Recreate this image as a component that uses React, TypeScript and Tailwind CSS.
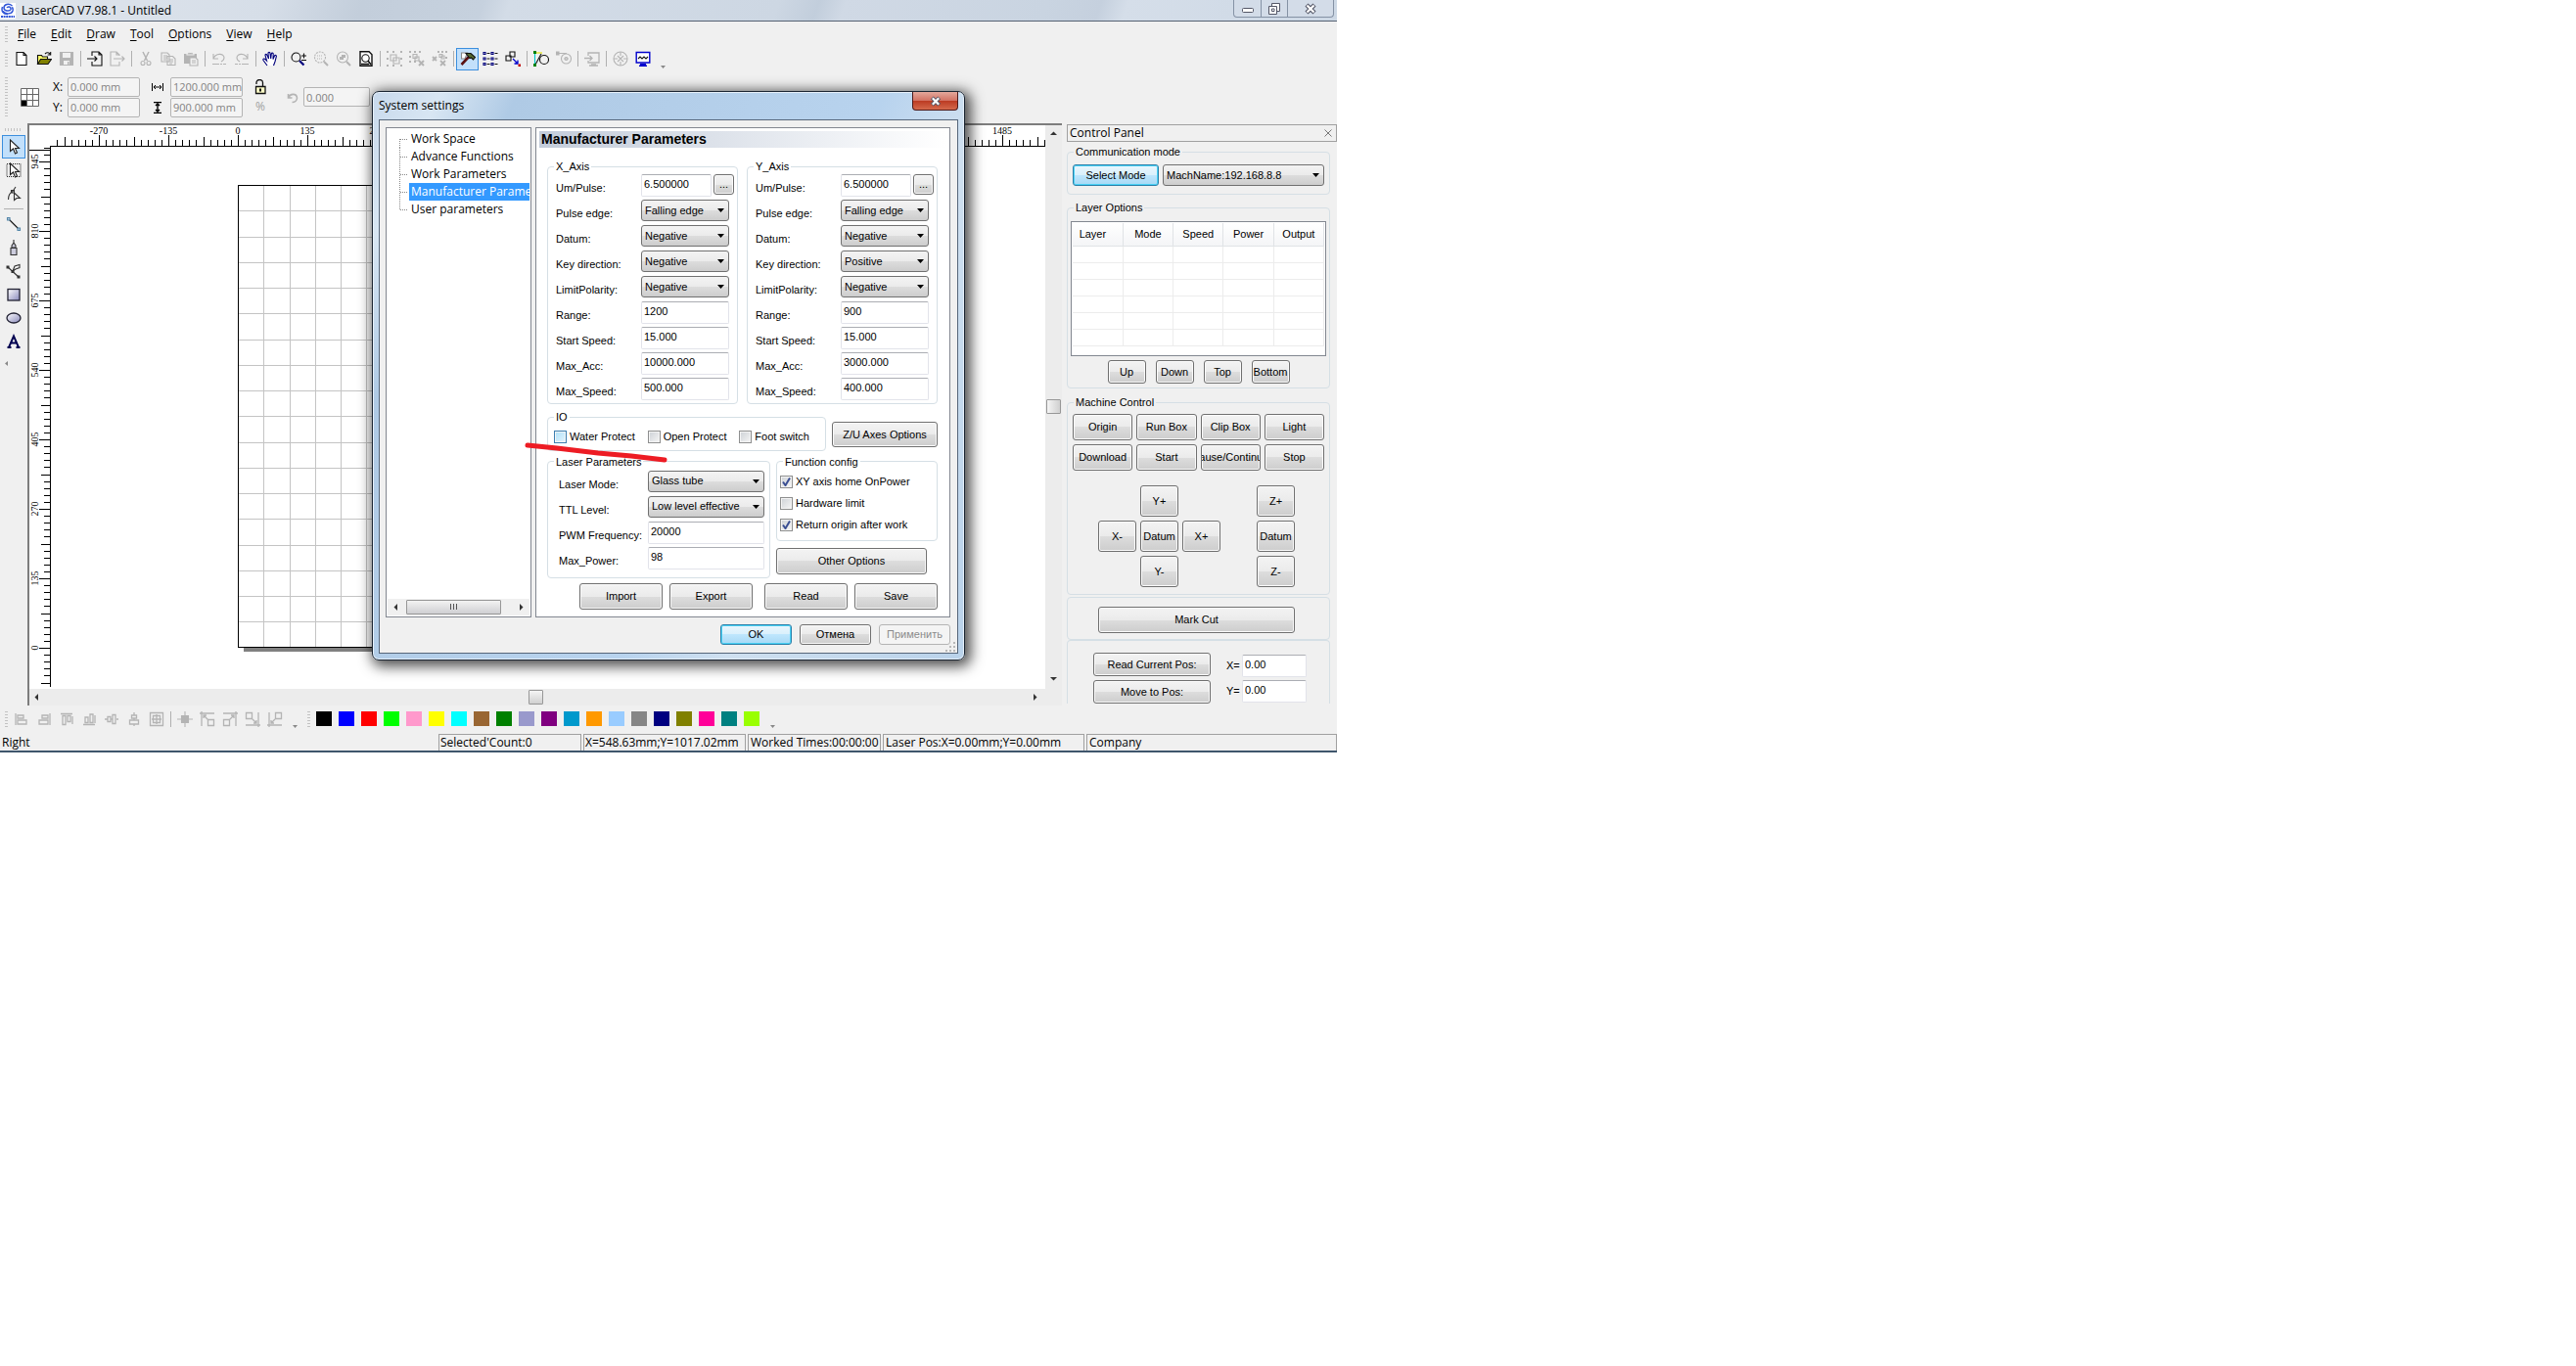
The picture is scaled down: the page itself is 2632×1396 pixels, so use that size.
import { useId, type ReactNode } from 'react';
import clsx from 'clsx';

const G = '#b4b4b4';
const K = '#111111';
const N = '#00007c';

const menus = ['File', 'Edit', 'Draw', 'Tool', 'Options', 'View', 'Help'];

const swatches = [
  '#000000', '#0000ff', '#ff0000', '#00ff00', '#ff99cc', '#ffff00', '#00ffff', '#996633', '#008000', '#9999cc',
  '#800080', '#0099cc', '#ff9900', '#99ccff', '#868686', '#000080', '#808000', '#ff0099', '#008080', '#99ff00',
];

const Icon = ({ children, size = 16 }: { children: ReactNode; size?: number }) => (
  <svg width={size} height={size} viewBox="0 0 16 16" fill="none" strokeWidth="1.1" aria-hidden="true" className="shrink-0">
    {children}
  </svg>
);

type Tool = { name: string; icon: ReactNode; active?: boolean } | null;

const mainTools: Tool[] = [
  { name: 'New', icon: <path d="M3 1.5h7l3 3v10H3zM10 1.5v3h3" stroke={K} fill="#fff" /> },
  {
    name: 'Open',
    icon: (
      <>
        <path d="M1.5 13.500V4.500h4l1 1.500h5v2.500" stroke={K} fill="#ffff66" />
        <path d="M1.500 13.500l3-5h11l-3.500 5z" stroke={K} fill="#808000" />
        <path d="M9 3c2-2 4-1.500 5.500.5M14.700 1v3h-3" stroke={K} />
      </>
    ),
  },
  {
    name: 'Save',
    icon: (
      <>
        <path d="M1.500 1.500h13v13h-13z" stroke={G} fill={G} />
        <path d="M4 2h8v5H4zM5 10h6v4H5z" fill="#f0f0f0" />
        <path d="M9 11h1.500v3H9z" fill={G} />
      </>
    ),
  },
  null,
  { name: 'Import', icon: <path d="M5 5V1h7l3 3v11H5v-4M12 1v3h3M0 8h10M7.500 5.500L10 8l-2.500 2.500" stroke={K} /> },
  { name: 'Export', icon: <path d="M10 5V4L7 1H1v14h9v-4M7 1v3h3M4 8h11M12.500 5.500L15 8l-2.500 2.500" stroke={G} /> },
  null,
  {
    name: 'Cut',
    icon: (
      <g stroke={G}>
        <path d="M5 1l4.500 9M11 1L6.500 10" strokeWidth="1.500" />
        <circle cx="5" cy="12.500" r="2" />
        <circle cx="11" cy="12.500" r="2" />
      </g>
    ),
  },
  {
    name: 'Copy',
    icon: <path d="M1 2h6l2 2v7H1zM3 5h4M3 7h4M3 9h3M7 5.500h5.500l2.500 2.500v6.500H7zM9 9h4M9 11h4M9 13h3" stroke={G} />,
  },
  {
    name: 'Paste',
    icon: (
      <>
        <path d="M1 3h13v10H1z" fill={G} />
        <path d="M4 3c0-2 7-2 7 0v1H4z" fill={G} stroke="#f0f0f0" />
        <path d="M7 7h6l2 2v6H7z" fill="#f0f0f0" stroke={G} />
        <path d="M9 10h4M9 12h4" stroke={G} />
      </>
    ),
  },
  null,
  { name: 'Undo', icon: <path d="M2 3v5h5M2 8c2-6 11-6 11-1 0 2-1 3-3 4M1 13.500h7M9 13.500h2M12 13.500h3" stroke={G} /> },
  { name: 'Redo', icon: <path d="M14 3v5H9M14 8c-2-6-11-6-11-1 0 2 1 3 3 4M15 13.500H8M7 13.500H5M4 13.500H1" stroke={G} /> },
  null,
  {
    name: 'Pan',
    icon: (
      <path
        d="M5 15L1 9.500c-.5-1.500 1-2 2-1l1.500 1.500L3 4.500c0-1.500 1.500-1.500 2 0L6.500 8 6 2.500c0-1.500 2-1.500 2 0L8.700 8l.6-5c.2-1.300 2-1 1.900.2L11 8.500l1.500-3.500c.6-1.200 2.200-.6 1.800.8L13 11l-1.500 4"
        stroke={N}
        fill="#fff"
      />
    ),
  },
  null,
  {
    name: 'Zoom',
    icon: (
      <>
        <circle cx="5.500" cy="6.500" r="4.500" stroke={K} />
        <path d="M9 10l4.500 4.500" stroke={N} strokeWidth="2.200" />
        <path d="M11 5h5M13.500 2.500v5M11 9.500h5" stroke={K} />
      </>
    ),
  },
  {
    name: 'Zoom selection',
    icon: (
      <>
        <circle cx="7" cy="6.500" r="5.500" stroke={G} strokeDasharray="2 1" />
        <path d="M11 11l4 4" stroke={G} strokeWidth="2" />
        <path d="M4 5h6M4 8h6" stroke={G} strokeDasharray="1 1" />
      </>
    ),
  },
  {
    name: 'Zoom objects',
    icon: (
      <>
        <circle cx="7" cy="6.500" r="5.500" stroke={G} />
        <path d="M11 11l4 4" stroke={G} strokeWidth="2" />
        <path d="M4 6h4v3H4zM6 4h4v3H6z" fill={G} />
      </>
    ),
  },
  {
    name: 'Zoom page',
    icon: (
      <>
        <path d="M2 .800h9l3 3v11.400H2z" stroke={K} fill="#fff" strokeWidth="1.400" />
        <circle cx="7.500" cy="7.500" r="3.700" stroke={K} />
        <path d="M10 10l3 4M3 13.500h8" stroke={K} strokeWidth="1.500" />
      </>
    ),
  },
  null,
  {
    name: 'Group',
    icon: (
      <g stroke={G}>
        <path d="M0 1h2M6 1h2M14 1h2M0 15h2M6 15h2M14 15h2M0 8h2M14 8h2" strokeWidth="2" />
        <path d="M4 4h6v6H4zM7 7h6v6H7z" />
      </g>
    ),
  },
  {
    name: 'Ungroup',
    icon: (
      <g stroke={G}>
        <path d="M0 1h2M5 1h2M10 1h2M0 6h2M0 11h2M5 11h2" strokeWidth="2" />
        <path d="M4 3.500h4v4H4zM6 6h4v4H6z" />
        <path d="M10 10l5 5M15 10l-5 5" strokeWidth="2" />
      </g>
    ),
  },
  {
    name: 'Ungroup all',
    icon: (
      <g stroke={G}>
        <path d="M6 1h2M10 1h2M14 1h2M14 7h2" strokeWidth="2" />
        <path d="M8 3.500h3v3H8zM10 5h3v3h-3z" />
        <path d="M1 6l4 4M5 6l-4 4M9 10l5 5M14 10l-5 5" strokeWidth="1.800" />
      </g>
    ),
  },
  null,
  {
    name: 'System settings',
    active: true,
    icon: (
      <>
        <path d="M1.500 2h6L5 8H1.500z" fill="#fff" stroke="#888" />
        <path d="M9 6l-7.500 8" stroke="#5a1010" strokeWidth="2.600" />
        <path d="M6 2.500h5l4.500 4-2 2.500-2-2-1.500.5L8 5z" fill="#556b2f" stroke={K} />
      </>
    ),
  },
  {
    name: 'Array',
    icon: (
      <g>
        <path d="M1 1.500h2v2H1zM1 7h2v2H1zM1 12.500h2v2H1zM9 1.500h2v2H9zM9 7h2v2H9zM9 12.500h2v2H9z" stroke={N} />
        <path d="M4.500 2.500h3M12.500 2.500h3M4.500 8h3M12.500 8h3M4.500 13.500h3M12.500 13.500h3" stroke={K} />
      </g>
    ),
  },
  {
    name: 'Offset',
    icon: (
      <>
        <path d="M5 1h5v5H5zM1 5h5v5H1z" stroke={K} />
        <path d="M8 8l5 5M13 9.500V13H9.500" stroke="#0000cc" strokeWidth="1.300" />
        <path d="M13.500 13.500h2.500v2.500h-2.500z" fill="#c00000" />
      </>
    ),
  },
  null,
  {
    name: 'Shape',
    icon: (
      <>
        <circle cx="11" cy="9" r="4.500" stroke={K} />
        <path d="M1.500 2v12" stroke="#00c8c8" />
        <path d="M2 14L8 3" stroke={K} />
        <path d="M3 2h6" stroke="#e6e600" />
        <path d="M0 0h3v3H0zM0 13h3v3H0z" fill="#008000" />
      </>
    ),
  },
  {
    name: 'Path',
    icon: (
      <g stroke={G}>
        <circle cx="10.500" cy="8" r="5" />
        <circle cx="10.500" cy="8" r="1.500" />
        <path d="M1 2.500h10M8.500 8h4" />
        <path d="M0 1h3v3H0z" fill={G} />
      </g>
    ),
  },
  null,
  { name: 'Send', icon: <path d="M4 5V2h11v10H4v-2M0 7.500h8M5.500 5L8 7.500 5.500 10M7 14h5M5 15h9" stroke={G} strokeWidth="1.300" /> },
  null,
  {
    name: 'Simulate',
    icon: (
      <g stroke={G}>
        <circle cx="8" cy="8" r="7" />
        <path d="M8 1v4M8 11v4M1 8h4M11 8h4M5 5l6 6M11 5l-6 6" />
      </g>
    ),
  },
  {
    name: 'Preview',
    icon: (
      <>
        <path d="M1.200 1.500h13.600v10.500H1.200z" stroke="#0000cc" strokeWidth="1.400" fill="#fff" />
        <path d="M3 8l2-2 2 2 2-2 2 2 2-2" stroke={K} />
        <path d="M5 13h6v1.500h1V16H4v-1.500h1z" fill="#0000cc" />
      </>
    ),
  },
];

const drawTools: Tool[] = [
  { name: 'Select', active: true, icon: <path d="M4.500 1v11.500l3-2.500 2 5 2-1-2-4.500h4z" stroke="#222" fill="#fff" /> },
  {
    name: 'Select region',
    icon: (
      <>
        <path d="M1 1.500h14v13H1z" stroke="#222" strokeDasharray="1 1" />
        <path d="M4.500 1v11.500l3-2.500 2 5 2-1-2-4.500h4z" stroke="#222" fill="#fff" />
      </>
    ),
  },
  { name: 'Edit node', icon: <path d="M10 1L7 5.500M2.500 14c0-4 1.500-7 4.500-8.500M5.500 4.500h3v2.500h-3zM8.500 7v7.500l2.500-2h3.500z" stroke="#333" /> },
  null,
  {
    name: 'Line',
    icon: (
      <>
        <path d="M3.500 3.500l9 9" stroke={K} />
        <path d="M1.500 1.500h2.500v2.500h-2.500zM12 12h2.500v2.500h-2.500z" stroke="#5588aa" fill="#bcd" />
      </>
    ),
  },
  { name: 'Polyline', icon: <path d="M8 0v3M6 6l2-3 2 3v2H6zM5 8.500h6v7H5z" stroke="#333" fill="#ccccdd" /> },
  {
    name: 'Curve',
    icon: (
      <>
        <path d="M2 4l11 10M7 8l2-5 5-1.500v3L10 6z" stroke="#333" />
        <path d="M.500 2.500h3v3h-3zM5.500 7h3v3h-3zM11.500 12.500h3v3h-3z" fill="#333" />
      </>
    ),
  },
  { name: 'Rectangle', icon: <rect x="2" y="2.500" width="12" height="11.500" stroke="#223" strokeWidth="1.300" fill="url(#tool-fill)" /> },
  { name: 'Ellipse', icon: <ellipse cx="8" cy="8" rx="7" ry="5" stroke="#223" strokeWidth="1.300" fill="url(#tool-fill)" /> },
  { name: 'Text', icon: <path d="M3 14L8 2.500l5 11.500M5 9.500h6M1.500 14h4M10.500 14h4" stroke="#000050" strokeWidth="1.900" /> },
];

const alignTools: Tool[] = [
  { name: 'Align left', icon: <path d="M2 2v12M4 4h6v3H4zM4 9h9v4H4z" stroke={G} strokeWidth="1.300" /> },
  { name: 'Align right', icon: <path d="M14 2v12M6 4h6v3H6zM3 9h9v4H3z" stroke={G} strokeWidth="1.300" /> },
  { name: 'Align top', icon: <path d="M2 2.500h12M4 4.500h3v9H4zM9 4.500h3v6H9zM14 5v8" stroke={G} strokeWidth="1.300" /> },
  { name: 'Align bottom', icon: <path d="M2 13.500h12M4 6h3v5.500H4zM9 3h3v8.500H9zM14 4v8" stroke={G} strokeWidth="1.300" /> },
  { name: 'Center rows', icon: <path d="M1 8h3M7 8h2M13 8h2M4 5.500h3v5H4zM9 3.500h3v9H9z" stroke={G} strokeWidth="1.300" /> },
  { name: 'Center columns', icon: <path d="M8 1v3M8 7v2M8 13v2M5.500 4h5v3h-5zM3.500 9h9v4h-9z" stroke={G} strokeWidth="1.300" /> },
  { name: 'Center page', icon: <path d="M1.500 1.500h13v13h-13zM4.500 4.500h7v7h-7zM8 3v10M3 8h10" stroke={G} strokeWidth="1.300" /> },
  null,
  { name: 'To centre', icon: <path d="M8 0v16M0 8h16M4.500 4.500h7v7h-7z" stroke={G} fill={G} /> },
  { name: 'To top left', icon: <path d="M0 2h15M2 0v15M4 4l5 5M4 7V4h3M8.500 8.500h6v6h-6z" stroke={G} strokeWidth="1.300" /> },
  { name: 'To top right', icon: <path d="M1 2h15M14 0v15M12 4L7 9M12 7V4H9M1.500 8.500h6v6h-6z" stroke={G} strokeWidth="1.300" /> },
  { name: 'To bottom right', icon: <path d="M1 14h15M14 1v15M12 12L8 8M12 9v3H9M1.500 1.500h6v6h-6z" stroke={G} strokeWidth="1.300" /> },
  { name: 'To bottom left', icon: <path d="M0 14h15M2 1v15M4 12l4-4M4 9v3h3M8.500 1.500h6v6h-6z" stroke={G} strokeWidth="1.300" /> },
];

const xAxis = [
  ['Um/Pulse:', '6.500000', 'more'],
  ['Pulse edge:', 'Falling edge', 'select'],
  ['Datum:', 'Negative', 'select'],
  ['Key direction:', 'Negative', 'select'],
  ['LimitPolarity:', 'Negative', 'select'],
  ['Range:', '1200', 'text'],
  ['Start Speed:', '15.000', 'text'],
  ['Max_Acc:', '10000.000', 'text'],
  ['Max_Speed:', '500.000', 'text'],
];

const yAxis = [
  ['Um/Pulse:', '6.500000', 'more'],
  ['Pulse edge:', 'Falling edge', 'select'],
  ['Datum:', 'Negative', 'select'],
  ['Key direction:', 'Positive', 'select'],
  ['LimitPolarity:', 'Negative', 'select'],
  ['Range:', '900', 'text'],
  ['Start Speed:', '15.000', 'text'],
  ['Max_Acc:', '3000.000', 'text'],
  ['Max_Speed:', '400.000', 'text'],
];

const treeItems = ['Work Space', 'Advance Functions', 'Work Parameters', 'Manufacturer Parameters', 'User parameters'];

const Grip = ({ className }: { className?: string }) => (
  <div className={clsx('w-[3px] shrink-0 bg-[repeating-linear-gradient(#c2c2c2_0_1px,transparent_1px_3px)]', className)} />
);

const Toolbar = ({ tools }: { tools: Tool[] }) => (
  <>
    {tools.map((tool, i) =>
      tool ? (
        <button
          key={tool.name}
          aria-label={tool.name}
          className={clsx('flex h-[23px] w-[23px] shrink-0 items-center justify-center', tool.active && 'border border-[#3c8fde] bg-[#c2e0fb]')}
        >
          <Icon>{tool.icon}</Icon>
        </button>
      ) : (
        <div key={i} className="flex w-[6px] shrink-0 justify-center">
          <div className="h-4 w-px bg-[#b0b0b0]" />
        </div>
      ),
    )}
  </>
);

const Button = ({ children, className, primary, disabled }: { children: ReactNode; className?: string; primary?: boolean; disabled?: boolean }) => (
  <button
    disabled={disabled}
    className={clsx(
      'flex items-center justify-center overflow-hidden rounded-[3px] border px-px whitespace-nowrap',
      primary && 'border-[#2c7fa8] bg-[linear-gradient(#eaf6fd,#d9f0fc_50%,#bee6fd_50%,#a7d9f5)] shadow-[inset_0_0_0_1px_#48d1f5]',
      disabled && 'border-[#b4b4b4] bg-[#f4f4f4] text-[#8b8b8b]',
      !primary && !disabled && 'border-[#707070] bg-[linear-gradient(#f3f3f3,#ebebeb_50%,#dddddd_50%,#cdcdcd)] shadow-[inset_0_0_0_1px_#fafafa]',
      className,
    )}
  >
    {children}
  </button>
);

const Select = ({ id, value, label, className }: { id?: string; value: string; label?: string; className?: string }) => (
  <div className={clsx('relative h-[22px]', className)}>
    <select
      id={id}
      aria-label={label}
      className="h-full w-full appearance-none rounded-[3px] border border-[#707070] bg-[linear-gradient(#f3f3f3,#ebebeb_50%,#dddddd_50%,#cdcdcd)] pr-4 pl-[3px]"
    >
      <option>{value}</option>
    </select>
    <svg width="7" height="4" viewBox="0 0 7 4" className="pointer-events-none absolute top-[9px] right-[5px]">
      <path d="M0 0h7L3.500 4z" fill="#000" />
    </svg>
  </div>
);

const TextBox = ({ id, value, className }: { id: string; value: string; className?: string }) => (
  <input
    id={id}
    defaultValue={value}
    className={clsx('h-[23px] rounded-[2px] border border-[#e2e3ea] border-t-[#abadb3] bg-white pb-[3px] pl-[2px]', className)}
  />
);

const Group = ({ title, children, className }: { title: string; children: ReactNode; className?: string }) => (
  <fieldset className={clsx('min-w-0 rounded-[4px] border border-[#d5dfe5]', className)}>
    <legend className="ml-[6px] px-[2px] leading-[14px]">{title}</legend>
    {children}
  </fieldset>
);

const Field = ({ label, value, kind, wide }: { label: string; value: string; kind: string; wide?: boolean }) => {
  const id = useId();
  const width = wide ? 'w-[119px]' : 'w-[90px]';
  return (
    <div className="flex h-[26px] items-start">
      <label htmlFor={id} className={clsx('pt-[7px] leading-[14px] whitespace-nowrap', wide ? 'w-[91px]' : 'w-[87px]')}>
        {label}
      </label>
      {kind === 'select' && <Select id={id} value={value} className={width} />}
      {kind === 'text' && <TextBox id={id} value={value} className={width} />}
      {kind === 'more' && (
        <div className="flex gap-[2px]">
          <TextBox id={id} value={value} className="w-[72px]" />
          <Button className="h-[21px] w-[21px]">...</Button>
        </div>
      )}
    </div>
  );
};

const Check = ({ label, checked, hot }: { label: string; checked?: boolean; hot?: boolean }) => (
  <label className="relative flex items-center gap-[3px] whitespace-nowrap">
    <input
      type="checkbox"
      defaultChecked={checked}
      className={clsx(
        'peer h-[13px] w-[13px] appearance-none border shadow-[inset_0_0_0_1px_#f4f4f4]',
        hot ? 'border-[#3c7fb1] bg-linear-to-br from-[#aee0f8] to-[#e4f5fd]' : 'border-[#8e8f8f] bg-linear-to-br from-[#cdd1d6] to-[#f6f6f6]',
      )}
    />
    <svg width="9" height="9" viewBox="0 0 9 9" className="pointer-events-none absolute left-[2px] hidden peer-checked:block">
      <path d="M1 4.500L3.500 8 8 .500" fill="none" stroke="#3b4f93" strokeWidth="2" />
    </svg>
    {label}
  </label>
);

const TitleBar = () => (
  <header className="flex h-[22px] items-start border-b border-[#566273] bg-[linear-gradient(110deg,#dfe5ec_0%,#d6dee8_20%,#c3cedb_27%,#c6d1de_36%,#d3dce7_38%,#cdd7e3_58%,#c2cedc_61%,#d0d9e5_63%,#c9d4e1_78%,#c5d0de_82%,#d5dee9_84%,#cdd8e5_100%)]">
    <svg width="16" height="16" viewBox="0 0 16 16" className="mt-[3px] bg-white" aria-hidden="true">
      <path d="M12.500 3C9 0 4 1.500 4 5c0 3.500 6 4 7 1.500C11.500 4 8 3 7 5M3 8.500c2.500 3.500 9 3 10-.5.500-2 0-3-.7-3.800M2.500 4C1 8 3 11.500 8 11.500" fill="none" stroke="#3358d8" strokeWidth="1.500" />
      <path d="M1 14h14" stroke="#3358d8" strokeWidth="2" strokeDasharray="2 .600" />
    </svg>
    <h1 className="ml-[6px] flex-1 leading-[21px]">LaserCAD V7.98.1 - Untitled</h1>
    <div className="mr-[3px] flex h-[18px] rounded-b-[4px] border border-t-0 border-[#8592a5] bg-[#d3dce8]">
      <button aria-label="Minimize" className="flex w-[28px] items-center justify-center border-r border-[#8592a5]">
        <svg width="12" height="14" viewBox="0 0 12 14">
          <rect x=".500" y="6.500" width="11" height="4" rx="1" fill="#fff" stroke="#535666" />
        </svg>
      </button>
      <button aria-label="Restore" className="flex w-[27px] items-center justify-center border-r border-[#8592a5]">
        <svg width="12" height="12" viewBox="0 0 12 12" fill="#fff" stroke="#535666">
          <path d="M3.500.500h8v8h-8z" />
          <path d="M.500 3.500h8v8h-8z" />
          <path d="M3.500 6h2.500v2.500H3.500z" />
        </svg>
      </button>
      <button aria-label="Close" className="flex w-[46px] items-center justify-center">
        <svg width="12" height="12" viewBox="0 0 12 12">
          <path d="M2 2l8 8M10 2l-8 8" stroke="#535666" strokeWidth="4.400" />
          <path d="M2.500 2.500l7 7M9.500 2.500l-7 7" stroke="#fff" strokeWidth="2.200" />
        </svg>
      </button>
    </div>
  </header>
);

const Dimension = ({ label, value, className }: { label: string; value: string; className?: string }) => (
  <input
    aria-label={label}
    disabled
    defaultValue={value}
    className={clsx('h-[20px] rounded-[2px] border border-[#b4b4b4] bg-[#f4f4f4] pl-[2px] text-[11px] text-[#838383]', className)}
  />
);

const PropertyBar = () => (
  <div className="flex h-[54px] items-center pl-[5px]">
    <Grip className="h-10" />
    <svg width="19" height="19" viewBox="0 0 19 19" className="ml-[13px]">
      <path d="M.500.500h18v18H.500zM6.500 0v19M12.500 0v19M0 6.500h19M0 12.500h19" fill="#fff" stroke="#666" />
      <path d="M1 13h5v5H1z" fill="#000" />
    </svg>
    <div className="ml-[14px] flex flex-col gap-px">
      <label className="flex items-center">
        <span className="w-[15px]">X:</span>
        <Dimension label="X" value="0.000 mm" className="w-[74px]" />
      </label>
      <label className="flex items-center">
        <span className="w-[15px]">Y:</span>
        <Dimension label="Y" value="0.000 mm" className="w-[74px]" />
      </label>
    </div>
    <div className="ml-3 flex flex-col gap-px">
      <div className="flex items-center gap-[7px]">
        <svg width="12" height="12" viewBox="0 0 12 12" fill="none" stroke="#000">
          <path d="M.500 2v8M11.500 2v8M2 6h8M4 4L2 6l2 2M8 4l2 2-2 2" />
        </svg>
        <Dimension label="Width" value="1200.000 mm" className="w-[74px]" />
      </div>
      <div className="flex items-center gap-[7px]">
        <svg width="12" height="12" viewBox="0 0 12 12" fill="none" stroke="#000">
          <path d="M2 .500h8M2 11.500h8M6 2v8M4 4l2-2 2 2M4 8l2 2 2-2" strokeWidth="1.400" />
        </svg>
        <Dimension label="Height" value="900.000 mm" className="w-[74px]" />
      </div>
    </div>
    <div className="ml-[10px] flex w-4 flex-col items-center gap-1">
      <svg width="14" height="16" viewBox="0 0 14 16" fill="none" stroke="#111">
        <path d="M3 5V3.500c0-4 6.500-4 6.500 0V7" strokeWidth="1.300" />
        <path d="M2.500 7.500h9.500v7H2.500z" fill="#ffffc8" strokeWidth="1.300" />
        <path d="M7 9.500v3" strokeWidth="2" />
      </svg>
      <span className="text-[#a0a0a0]">%</span>
    </div>
    <svg width="13" height="13" viewBox="0 0 13 13" fill="none" stroke={G} className="ml-[18px]">
      <path d="M2.500 3v4h4M3 6.500c1-4 8-4.500 8.500.5 0 3-2.500 4.500-5 4.500" strokeWidth="1.600" />
    </svg>
    <Dimension label="Rotation" value="0.000" className="ml-[5px] w-[68px]" />
  </div>
);

// One ruler step is 13.5 mm, ten steps carry a label.
const STEP = 7.1;

const Ruler = () => {
  const across = Array.from({ length: 143 }, (_, i) => i - 26);
  const up = Array.from({ length: 78 }, (_, i) => i - 5);
  return (
    <g fontFamily="'Liberation Serif', serif" fontSize="10" textAnchor="middle">
      <path d="M21 21.500H1038M21.500 21v553M0 25.500h21" stroke="#000" />
      {across.map((k) => {
        const x = Math.round(213 + k * STEP) + 0.5;
        const top = k % 10 === 0 ? 10 : k % 5 === 0 ? 12 : 15;
        return <path key={k} d={`M${x} ${top}V21`} stroke="#000" />;
      })}
      {up.map((k) => {
        const y = Math.round(534 - k * STEP) + 0.5;
        const left = k % 10 === 0 ? 10 : k % 5 === 0 ? 12 : 15;
        return <path key={k} d={`M${left} ${y}H21`} stroke="#000" />;
      })}
      {across.filter((k) => k % 10 === 0).map((k) => (
        <text key={k} x={213 + k * STEP} y="9">
          {k * 13.5}
        </text>
      ))}
      {up.filter((k) => k % 10 === 0).map((k) => {
        const y = 534 - k * STEP;
        return (
          <text key={k} x="9" y={y} transform={`rotate(-90 9 ${y})`}>
            {k * 13.5}
          </text>
        );
      })}
    </g>
  );
};

const Arrow = ({ d, className }: { d: string; className?: string }) => (
  <svg width="7" height="7" viewBox="0 0 7 7" className={className} aria-hidden="true">
    <path d={d} fill="#333" />
  </svg>
);

const LEFT = 'M5 0v7L1.500 3.500z';
const RIGHT = 'M2 0v7l3.500-3.500z';

const Canvas = () => (
  <main className="flex min-w-0 flex-1 flex-col border-t-2 border-l-2 border-[#7d7d7d] bg-white">
    <div className="flex">
      <svg className="h-[576px] min-w-0 flex-1 overflow-hidden bg-white">
        <path d="M219 533h632v5H219z" fill="#808080" />
        <rect x="213.500" y="61.500" width="631" height="472" fill="#fff" />
        {Array.from({ length: 23 }, (_, i) => (
          <path key={i} d={`M${Math.round(213 + (i + 1) * 26.25) + 0.5} 62V533`} stroke="#c4c4c4" />
        ))}
        {Array.from({ length: 17 }, (_, i) => (
          <path key={i} d={`M214 ${Math.round(61 + (i + 1) * 26.25) + 0.5}H844`} stroke="#c4c4c4" />
        ))}
        <rect x="213.500" y="61.500" width="631" height="472" fill="none" stroke="#000" />
        <Ruler />
      </svg>
      <div className="flex w-[17px] flex-col items-center justify-between bg-[#ececec] pt-[5px] pb-[7px]">
        <Arrow d="M0 5h7L3.500 1.500z" />
        <div className="h-[15px] w-[15px] rounded-[1px] border border-[#979797] bg-linear-to-r from-[#f5f5f5] to-[#d0d0d0]" />
        <Arrow d="M0 2h7L3.500 5.500z" />
      </div>
    </div>
    <div className="flex h-[17px] items-center justify-between bg-[#ececec] pr-[24px] pl-[4px]">
      <Arrow d={LEFT} />
      <div className="h-[15px] w-[15px] rounded-[1px] border border-[#979797] bg-linear-to-b from-[#f5f5f5] to-[#d0d0d0]" />
      <Arrow d={RIGHT} />
    </div>
  </main>
);

const ControlPanel = () => {
  const xId = useId();
  const yId = useId();
  return (
    <aside className="w-[281px] shrink-0 pl-[5px] font-['Liberation_Sans',sans-serif] text-[11px]">
      <div className="mt-px flex h-[18px] items-center justify-between border border-[#a0a0a0] pr-1 pl-[2px] font-['Open_Sans',sans-serif] text-xs">
        <h2>Control Panel</h2>
        <button aria-label="Close panel">
          <svg width="8" height="8" viewBox="0 0 8 8">
            <path d="M.500.500l7 7M7.500.500l-7 7" stroke="#777" />
          </svg>
        </button>
      </div>
      <div className="pr-[7px]">
        <Group title="Communication mode" className="mt-[3px]">
          <div className="flex gap-1 px-[5px] pt-[6px] pb-2">
            <Button primary className="h-[22px] w-[88px]">Select Mode</Button>
            <Select label="Machine" value="MachName:192.168.8.8" className="min-w-0 flex-1" />
          </div>
        </Group>
        <Group title="Layer Options" className="mt-[6px]">
          <div className="px-[3px] pt-[7px] pb-1">
            <div className="h-[138px] border border-[#828790] bg-white px-px pt-px">
              <table className="w-full table-fixed border-collapse">
                <thead>
                  <tr className="h-[23px] bg-linear-to-b from-white to-[#f4f5f7]">
                    {['Layer', 'Mode', 'Speed', 'Power', 'Output'].map((name, i) => (
                      <th key={name} className={clsx('border-r border-b border-[#e0e3e6] font-normal', i === 0 && 'pr-[10px]')}>
                        {name}
                      </th>
                    ))}
                  </tr>
                </thead>
                <tbody>
                  {[0, 1, 2, 3, 4, 5].map((row) => (
                    <tr key={row} className="h-[17px]">
                      {[0, 1, 2, 3, 4].map((col) => (
                        <td key={col} className="border-r border-b border-[#ececec]" />
                      ))}
                    </tr>
                  ))}
                </tbody>
              </table>
            </div>
            <div className="mt-1 flex justify-center gap-[10px]">
              <Button className="h-[24px] w-[39px]">Up</Button>
              <Button className="h-[24px] w-[39px]">Down</Button>
              <Button className="h-[24px] w-[39px]">Top</Button>
              <Button className="h-[24px] w-[39px]">Bottom</Button>
            </div>
          </div>
        </Group>
        <Group title="Machine Control" className="mt-[7px]">
          <div className="grid grid-cols-4 gap-1 px-[5px] pt-[5px]">
            {['Origin', 'Run Box', 'Clip Box', 'Light', 'Download', 'Start', 'Pause/Continue', 'Stop'].map((name) => (
              <Button key={name} className="h-[27px]">{name}</Button>
            ))}
          </div>
          <div className="flex justify-between pt-[15px] pr-[35px] pb-[7px] pl-[31px]">
            <div className="grid grid-cols-3 gap-1">
              <Button className="col-start-2 h-[32px] w-[39px]">Y+</Button>
              <Button className="col-start-1 h-[32px] w-[39px]">X-</Button>
              <Button className="h-[32px] w-[39px]">Datum</Button>
              <Button className="h-[32px] w-[39px]">X+</Button>
              <Button className="col-start-2 h-[32px] w-[39px]">Y-</Button>
            </div>
            <div className="grid gap-1">
              <Button className="h-[32px] w-[39px]">Z+</Button>
              <Button className="h-[32px] w-[39px]">Datum</Button>
              <Button className="h-[32px] w-[39px]">Z-</Button>
            </div>
          </div>
        </Group>
        <div className="mt-[2px] rounded-[4px] border border-[#d5dfe5] pt-[9px] pr-[35px] pb-[6px] pl-[31px]">
          <Button className="h-[27px] w-full">Mark Cut</Button>
        </div>
        <div className="flex gap-4 rounded-t-[4px] border border-b-0 border-[#d5dfe5] pt-3 pl-[26px]">
          <div className="flex w-[120px] flex-col gap-1">
            <Button className="h-[24px]">Read Current Pos:</Button>
            <Button className="h-[24px]">Move to Pos:</Button>
          </div>
          <div className="flex flex-col gap-[3px] pt-[2px]">
            <div className="flex items-center">
              <label htmlFor={xId} className="w-4">X=</label>
              <TextBox id={xId} value="0.00" className="w-[66px]" />
            </div>
            <div className="flex items-center">
              <label htmlFor={yId} className="w-4">Y=</label>
              <TextBox id={yId} value="0.00" className="w-[66px]" />
            </div>
          </div>
        </div>
      </div>
    </aside>
  );
};

const SettingsTree = () => (
  <nav className="flex w-[149px] flex-col border border-[#828790] bg-white font-['Open_Sans',sans-serif] text-xs">
    <ul className="flex-1 overflow-hidden pt-[2px] pr-px">
      {treeItems.map((item, i) => (
        <li key={item} className="flex h-[18px] items-center pl-[13px]">
          <svg width="10" height="18" viewBox="0 0 10 18" fill="none" stroke="#888" strokeDasharray="1 1" className="shrink-0">
            <path d={i === 0 ? 'M.500 9v9' : i === treeItems.length - 1 ? 'M.500 0v9' : 'M.500 0v18'} />
            <path d="M1 9.500h8" />
          </svg>
          <a
            href="#"
            className={clsx('flex h-full min-w-0 items-center overflow-hidden pl-[2px] whitespace-nowrap', i === 3 && 'flex-1 bg-[#3399ff] text-white')}
          >
            {item}
          </a>
        </li>
      ))}
    </ul>
    <div className="mx-px mb-px flex h-[17px] items-center bg-[#f0f0f0] px-[5px]">
      <Arrow d={LEFT} />
      <div className="ml-[7px] flex h-[15px] w-[97px] items-center justify-center gap-[2px] rounded-[1px] border border-[#979797] bg-linear-to-b from-[#f3f3f3] to-[#cfcfd2]">
        <span className="h-[6px] w-px bg-[#555]" />
        <span className="h-[6px] w-px bg-[#555]" />
        <span className="h-[6px] w-px bg-[#555]" />
      </div>
      <Arrow d={RIGHT} className="ml-auto" />
    </div>
  </nav>
);

const AxisGroup = ({ title, rows }: { title: string; rows: string[][] }) => (
  <Group title={title} className="w-[195px]">
    <div className="pt-px pl-2">
      {rows.map(([label, value, kind]) => (
        <Field key={label} label={label} value={value} kind={kind} />
      ))}
    </div>
  </Group>
);

const SettingsDialog = () => (
  <div
    role="dialog"
    aria-label="System settings"
    className="absolute top-[93px] left-[380px] rounded-[7px] border border-[#1c2633] bg-[linear-gradient(115deg,#c8d9ec_0%,#d8e6f3_8%,#afcae5_17%,#b5d0eb_45%,#b8d3ee_60%,#cfe0f0_72%,#b9d2ea_100%)] px-[6px] pb-[6px] shadow-[inset_0_0_0_1px_#e6f0fa,3px_3px_14px_3px_rgba(0,0,0,0.7)]"
  >
    <div className="flex h-[28px] items-start justify-between">
      <h2 className="leading-[28px]">System settings</h2>
      <button
        aria-label="Close"
        className="flex h-[19px] w-[47px] items-center justify-center rounded-b-[4px] border border-t-0 border-[#4d1a1a] bg-[linear-gradient(#e3a89c,#d27364_48%,#bb3a22_50%,#d4694c)]"
      >
        <svg width="12" height="11" viewBox="0 0 12 12">
          <path d="M2 2l8 8M10 2l-8 8" stroke="#535666" strokeWidth="4.400" />
          <path d="M2.500 2.500l7 7M9.500 2.500l-7 7" stroke="#fff" strokeWidth="2.400" />
        </svg>
      </button>
    </div>
    <div className="border border-[#56667a] bg-[#f0f0f0] pt-[7px] pr-[7px] pb-[8px] pl-[6px] font-['Liberation_Sans',sans-serif] text-[11px]">
      <div className="flex gap-1">
        <SettingsTree />
        <section className="w-[424px] border border-[#828790] bg-white pb-[7px]">
          <h3 className="mx-[3px] mt-[3px] bg-linear-to-r from-[#c3ccda] to-white pl-[2px] text-[14px] leading-[17px] font-bold">
            Manufacturer Parameters
          </h3>
          <div className="mt-3 pr-3 pl-[11px]">
            <div className="flex justify-between">
              <AxisGroup title="X_Axis" rows={xAxis} />
              <AxisGroup title="Y_Axis" rows={yAxis} />
            </div>
            <div className="mt-[6px] flex items-start gap-[6px]">
              <Group title="IO" className="flex-1">
                <div className="flex justify-between pt-[6px] pr-4 pb-[6px] pl-[6px]">
                  <Check label="Water Protect" hot />
                  <Check label="Open Protect" />
                  <Check label="Foot switch" />
                </div>
              </Group>
              <Button className="mt-3 h-[26px] w-[108px]">Z/U Axes Options</Button>
            </div>
            <div className="mt-1 flex gap-[6px]">
              <Group title="Laser Parameters" className="w-[228px]">
                <div className="pt-[2px] pb-[5px] pl-[11px]">
                  <Field wide label="Laser Mode:" value="Glass tube" kind="select" />
                  <Field wide label="TTL Level:" value="Low level effective" kind="select" />
                  <Field wide label="PWM Frequency:" value="20000" kind="text" />
                  <Field wide label="Max_Power:" value="98" kind="text" />
                </div>
              </Group>
              <div className="flex-1">
                <Group title="Function config">
                  <div className="grid auto-rows-[22px] pt-[3px] pb-[4px] pl-[3px]">
                    <Check label="XY axis home OnPower" checked />
                    <Check label="Hardware limit" />
                    <Check label="Return origin after work" checked />
                  </div>
                </Group>
                <Button className="mt-[7px] h-[27px] w-[154px]">Other Options</Button>
              </div>
            </div>
            <div className="mt-[5px] flex justify-end gap-3">
              <div className="flex gap-[7px]">
                <Button className="h-[27px] w-[85px]">Import</Button>
                <Button className="h-[27px] w-[85px]">Export</Button>
              </div>
              <div className="flex gap-[7px]">
                <Button className="h-[27px] w-[85px]">Read</Button>
                <Button className="h-[27px] w-[85px]">Save</Button>
              </div>
            </div>
          </div>
        </section>
      </div>
      <div className="mt-[7px] flex justify-end gap-2">
        <Button primary className="h-[21px] w-[73px]">OK</Button>
        <Button className="h-[21px] w-[73px]">Отмена</Button>
        <Button disabled className="h-[21px] w-[73px]">Применить</Button>
      </div>
    </div>
    <svg width="10" height="10" viewBox="0 0 10 10" fill="#b8b8b8" className="absolute right-[9px] bottom-[8px]">
      <path d="M8 0h2v2H8zM4 4h2v2H4zM8 4h2v2H8zM0 8h2v2H0zM4 8h2v2H4zM8 8h2v2H8z" />
    </svg>
    <svg width="152" height="24" viewBox="0 0 152 24" className="pointer-events-none absolute top-[356px] left-[152px]">
      <path d="M6 5l30 3 42 5 34 3 34 4" fill="none" stroke="#ed1c24" strokeWidth="5" strokeLinecap="round" />
    </svg>
  </div>
);

const App = () => (
  <div className="min-h-screen bg-white font-['Open_Sans',sans-serif] text-xs text-black">
    <div className="relative w-full max-w-[1366px] bg-[#f0f0f0]">
      <TitleBar />
      <nav className="flex h-[26px] items-center pl-[5px]">
        <Grip className="h-4" />
        <div className="ml-[10px] flex gap-[15px]">
          {menus.map((name) => (
            <button key={name}>
              <span className="underline underline-offset-2">{name[0]}</span>
              {name.slice(1)}
            </button>
          ))}
        </div>
      </nav>
      <div className="flex h-6 items-center pl-[5px]">
        <Grip className="mr-[2px] h-4" />
        <Toolbar tools={mainTools} />
        <svg width="5" height="3" viewBox="0 0 5 3" className="mt-4 ml-[7px]">
          <path d="M0 0h5L2.500 3z" fill="#888" />
        </svg>
      </div>
      <PropertyBar />
      <div className="flex">
        <div className="flex w-[28px] shrink-0 flex-col items-center pt-[5px]">
          <svg width="0" height="0" className="absolute">
            <defs>
              <linearGradient id="tool-fill" x1="0" y1="0" x2="1" y2="1">
                <stop offset="0" stopColor="#fff" />
                <stop offset="1" stopColor="#8888bb" />
              </linearGradient>
            </defs>
          </svg>
          <div className="mb-1 h-[3px] w-[18px] bg-[repeating-linear-gradient(90deg,#c2c2c2_0_1px,transparent_1px_3px)]" />
          {drawTools.map((tool, i) =>
            tool ? (
              <button
                key={tool.name}
                aria-label={tool.name}
                className={clsx('flex h-6 w-6 items-center justify-center', tool.active && 'border border-[#3c8fde] bg-[#c2e0fb]')}
              >
                <Icon>{tool.icon}</Icon>
              </button>
            ) : (
              <div key={i} className="my-[3px] h-px w-5 bg-[#b0b0b0]" />
            ),
          )}
          <svg width="3" height="5" viewBox="0 0 3 5" className="mt-2 mr-4">
            <path d="M3 0v5L0 2.500z" fill="#888" />
          </svg>
        </div>
        <Canvas />
        <ControlPanel />
      </div>
      <div className="flex h-[27px] items-center pl-[5px]">
        <Grip className="mr-[2px] h-4" />
        <Toolbar tools={alignTools} />
        <svg width="5" height="3" viewBox="0 0 5 3" className="mt-4 ml-[7px]">
          <path d="M0 0h5L2.500 3z" fill="#888" />
        </svg>
        <Grip className="ml-[10px] h-4" />
        <div className="ml-[6px] flex gap-[7px]">
          {swatches.map((color) => (
            <button key={color} aria-label={color} className="h-[15px] w-4" style={{ backgroundColor: color }} />
          ))}
        </div>
        <svg width="5" height="3" viewBox="0 0 5 3" className="mt-4 ml-[11px]">
          <path d="M0 0h5L2.500 3z" fill="#888" />
        </svg>
      </div>
      <footer className="flex gap-[2px] border-b-2 border-[#3f566c] pt-[2px] leading-[16px]">
        <div className="w-[446px] pt-px pl-[2px]">Right</div>
        <div className="w-[146px] border border-b-0 border-[#a0a0a0] pl-px">Selected'Count:0</div>
        <div className="w-[166px] border border-b-0 border-[#a0a0a0] pl-px">X=548.63mm;Y=1017.02mm</div>
        <div className="w-[136px] border border-b-0 border-[#a0a0a0] pl-[2px]">Worked Times:00:00:00</div>
        <div className="w-[206px] border border-b-0 border-[#a0a0a0] pl-[2px]">Laser Pos:X=0.00mm;Y=0.00mm</div>
        <div className="flex-1 border border-b-0 border-[#a0a0a0] pl-[2px]">Company</div>
      </footer>
      <SettingsDialog />
    </div>
  </div>
);

export default App;
